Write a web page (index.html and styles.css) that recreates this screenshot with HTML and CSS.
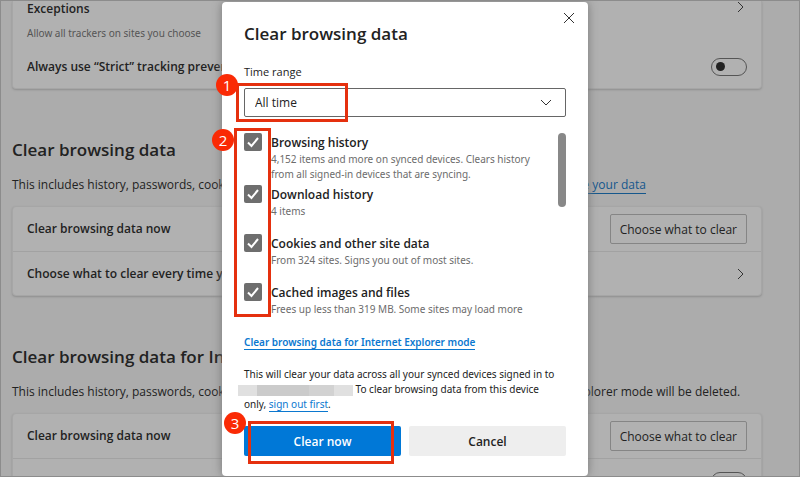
FILE: index.html
```html
<!DOCTYPE html>
<html lang="en">
<head>
  <meta charset="utf-8">
  <title>Settings</title>
  <link rel="stylesheet" href="styles.css">
</head>
<body>
  <div class="page">
    <main class="settings">
      <section class="card card-top">
        <div class="row row-exceptions">
          <div>
            <h3>Exceptions</h3>
            <p class="hint">Allow all trackers on sites you choose</p>
          </div>
          <svg class="arrow" viewBox="0 0 8 12"><path d="M1 1l5 5-5 5"/></svg>
        </div>
        <div class="row row-strict">
          <label for="strict">Always use “Strict” tracking prevention</label>
          <input type="checkbox" class="switch" id="strict">
        </div>
      </section>

      <h2>Clear browsing data</h2>
      <p class="intro">This includes history, passwords, cookies, and more. Only data from this profile will be deleted. <a href="#">Manage your data</a></p>
      <section class="card">
        <div class="row">
          <h3>Clear browsing data now</h3>
          <button class="choose">Choose what to clear</button>
        </div>
        <div class="row line">
          <h3>Choose what to clear every time you close</h3>
          <svg class="arrow" viewBox="0 0 8 12"><path d="M1 1l5 5-5 5"/></svg>
        </div>
      </section>

      <h2>Clear browsing data for Internet Explorer</h2>
      <p class="intro">This includes history, passwords, cookies, and more. Chosen data for Internet Explorer and Internet Explorer mode will be deleted.</p>
      <section class="card">
        <div class="row">
          <h3>Clear browsing data now</h3>
          <button class="choose">Choose what to clear</button>
        </div>
        <div class="row line">
          <span></span>
          <input type="checkbox" class="switch" aria-label="Clear on exit">
        </div>
      </section>
    </main>

    <div class="overlay">
      <div class="dialog" role="dialog" aria-labelledby="dialog-title">
        <button class="close" aria-label="Close"><svg viewBox="0 0 12 12"><path d="M1 1l10 10M11 1L1 11"/></svg></button>
        <h1 id="dialog-title">Clear browsing data</h1>
        <label class="range-label" for="range">Time range</label>
        <div class="range">
          <select id="range">
            <option>All time</option>
          </select>
          <svg class="chevron" viewBox="0 0 12 8"><path d="M1 1l5 5 5-5"/></svg>
          <div class="mark mark-range"><span class="badge">1</span></div>
        </div>

        <div class="list">
          <ul>
            <li class="tall">
              <input type="checkbox" id="history" checked>
              <div>
                <label for="history">Browsing history</label>
                <p>4,152 items and more on synced devices. Clears history<br>from all signed-in devices that are syncing.</p>
              </div>
            </li>
            <li>
              <input type="checkbox" id="downloads" checked>
              <div>
                <label for="downloads">Download history</label>
                <p>4 items</p>
              </div>
            </li>
            <li>
              <input type="checkbox" id="cookies" checked>
              <div>
                <label for="cookies">Cookies and other site data</label>
                <p>From 324 sites. Signs you out of most sites.</p>
              </div>
            </li>
            <li>
              <input type="checkbox" id="cache" checked>
              <div>
                <label for="cache">Cached images and files</label>
                <p>Frees up less than 319 MB. Some sites may load more</p>
              </div>
            </li>
          </ul>
          <div class="scrollbar"></div>
          <div class="mark mark-list"><span class="badge">2</span></div>
        </div>

        <a class="ie-link" href="#">Clear browsing data for Internet Explorer mode</a>
        <p class="note">This will clear your data across all your synced devices signed in to<br><span class="account"><i></i><i></i><i></i><i></i></span> To clear browsing data from this device<br>only, <a href="#">sign out first</a>.</p>
        <div class="buttons">
          <button class="primary">Clear now</button>
          <button>Cancel</button>
          <div class="mark mark-clear"><span class="badge">3</span></div>
        </div>
      </div>
    </div>
  </div>
</body>
</html>
```

FILE: styles.css
```css
* {
  box-sizing: border-box;
}

body {
  margin: 0;
  background: #b4b4b4;
  font-family: "Open Sans", "Noto Sans", sans-serif;
  font-size: 12px;
  line-height: 16px;
  color: #222;
}

h1, h2, h3, p, ul {
  margin: 0;
  padding: 0;
}

h1, h2 {
  font-size: 17px;
  line-height: 24px;
  font-weight: 600;
}

h3, .row label {
  font-size: 12px;
  line-height: 16px;
  font-weight: 600;
}

button, select {
  font-family: inherit;
  font-size: 12px;
  color: inherit;
}

svg {
  fill: none;
  stroke: #333;
}

.page {
  position: relative;
  height: 100vh;
  overflow: hidden;
  border: 1px solid #8c8c8c;
  background: #acacac;
}

/* settings page behind the dialog */
.settings {
  padding: 0 37px 0 11px;
}

.settings h2 {
  margin-top: 49px;
}

.card {
  border: 1px solid #a6a6a6;
  border-radius: 4px;
  background: #b1b1b1;
  box-shadow: 0 1px 2px #8f8f8f;
}

.card-top {
  border-top: none;
  border-radius: 0 0 4px 4px;
}

.row {
  display: flex;
  justify-content: space-between;
  align-items: center;
  height: 44px;
  padding: 0 14px;
}

.row.line {
  border-top: 1px solid #a2a2a2;
}

.row-exceptions {
  align-items: flex-start;
}

.row-strict {
  height: 43px;
}

.row-exceptions .hint {
  margin-top: 8px;
}

.hint {
  font-family: "Noto Sans", sans-serif;
  font-size: 10px;
  color: #555;
}

.arrow {
  width: 8px;
  height: 12px;
  margin-right: 2px;
}

.switch {
  appearance: none;
  display: flex;
  align-items: center;
  width: 36px;
  height: 18px;
  margin: 0;
  padding-left: 4px;
  border: 1px solid #555;
  border-radius: 9px;
}

.switch::before {
  content: "";
  width: 9px;
  height: 9px;
  border-radius: 50%;
  background: #222;
}

.intro {
  margin: 15px 0 13px;
  white-space: nowrap;
}

.intro a {
  color: #15578c;
  text-decoration: none;
  border-bottom: 1px solid #15578c;
}

.choose {
  height: 30px;
  padding: 0 9px;
  border: 1px solid #858585;
  border-radius: 2px;
  background: none;
}

/* dialog */
.overlay {
  position: absolute;
  inset: 0;
  display: flex;
  justify-content: center;
  align-items: flex-start;
  padding: 1px 0 0 10px;
}

.dialog {
  position: relative;
  width: 366px;
  padding: 20px 22px;
  border-radius: 4px;
  background: #fff;
  box-shadow: 0 0 10px #777;
}

.close {
  position: absolute;
  top: 10px;
  right: 13px;
  display: flex;
  padding: 0;
  border: none;
  background: none;
}

.close svg {
  width: 12px;
  height: 12px;
}

.range-label {
  display: block;
  margin: 18px 0 8px;
  font-size: 11px;
}

.range {
  position: relative;
  display: flex;
  align-items: center;
}

.range select {
  appearance: none;
  width: 100%;
  height: 29px;
  padding: 0 10px;
  border: 1px solid #666;
  border-radius: 2px;
  background: #fff;
}

.chevron {
  position: absolute;
  right: 14px;
  width: 12px;
  height: 8px;
}

.list {
  position: relative;
  display: flex;
  justify-content: space-between;
  margin-top: 16px;
}

.list ul {
  list-style: none;
}

.list li {
  display: flex;
  gap: 9px;
  height: 49px;
}

.list .tall {
  height: 52px;
}

.list li input {
  appearance: none;
  flex: none;
  width: 18px;
  height: 18px;
  margin: 0;
  border-radius: 2px;
  background: #6e6e6e url("data:image/svg+xml,%3Csvg xmlns='http://www.w3.org/2000/svg' viewBox='0 0 18 18'%3E%3Cpath d='M4 9.5l3.5 3.5L14 5' fill='none' stroke='white' stroke-width='2'/%3E%3C/svg%3E");
}

.list label {
  display: block;
  line-height: 19px;
  font-weight: 600;
}

.list p {
  font-family: "Noto Sans", sans-serif;
  font-size: 10px;
  line-height: 15px;
  color: #6c6c6c;
}

.scrollbar {
  flex: none;
  width: 8px;
  height: 74px;
  border-radius: 4px;
  background: #888;
}

.dialog a {
  color: #0b78cf;
  text-decoration: none;
  border-bottom: 1px solid #0b78cf;
}

.dialog .ie-link {
  display: inline-block;
  margin-top: 3px;
  font-family: "Noto Sans", sans-serif;
  font-size: 10px;
  line-height: 14px;
  font-weight: 600;
}

.note {
  margin-top: 17px;
  font-family: "Noto Sans", sans-serif;
  font-size: 10px;
  line-height: 15px;
}

.note a {
  display: inline-block;
  line-height: 14px;
}

.account {
  display: inline-flex;
  height: 11px;
  margin-left: -6px;
  vertical-align: middle;
}

.account i {
  width: 19px;
  background: #e0e0e0;
}

.account i:nth-child(2) {
  width: 52px;
  background: #cbcbcb;
}

.account i:nth-child(3) {
  width: 25px;
  background: #d2d2d2;
}

.buttons {
  position: relative;
  display: flex;
  gap: 8px;
  margin-top: 14px;
}

.buttons button {
  flex: 1;
  height: 30px;
  border: none;
  border-radius: 2px;
  background: #eee;
  font-weight: 600;
}

.buttons .primary {
  background: #0078d7;
  color: #fff;
}

/* numbered step marks */
.mark {
  position: absolute;
  border: 3px solid #e5300e;
  pointer-events: none;
}

.mark-range {
  top: -5px;
  left: -8px;
  width: 112px;
  height: 39px;
}

.mark-list {
  top: -5px;
  left: -10px;
  width: 37px;
  height: 189px;
}

.mark-clear {
  top: -5px;
  left: 4px;
  width: 146px;
  height: 43px;
}

.badge {
  position: absolute;
  top: -12px;
  left: -23px;
  width: 22px;
  height: 22px;
  border-radius: 50%;
  background: #fa2a05;
  color: #fff;
  font-size: 15px;
  line-height: 22px;
  text-align: center;
}

.mark-list .badge {
  top: -2px;
  left: -25px;
}

.mark-clear .badge {
  left: -27px;
}
```
